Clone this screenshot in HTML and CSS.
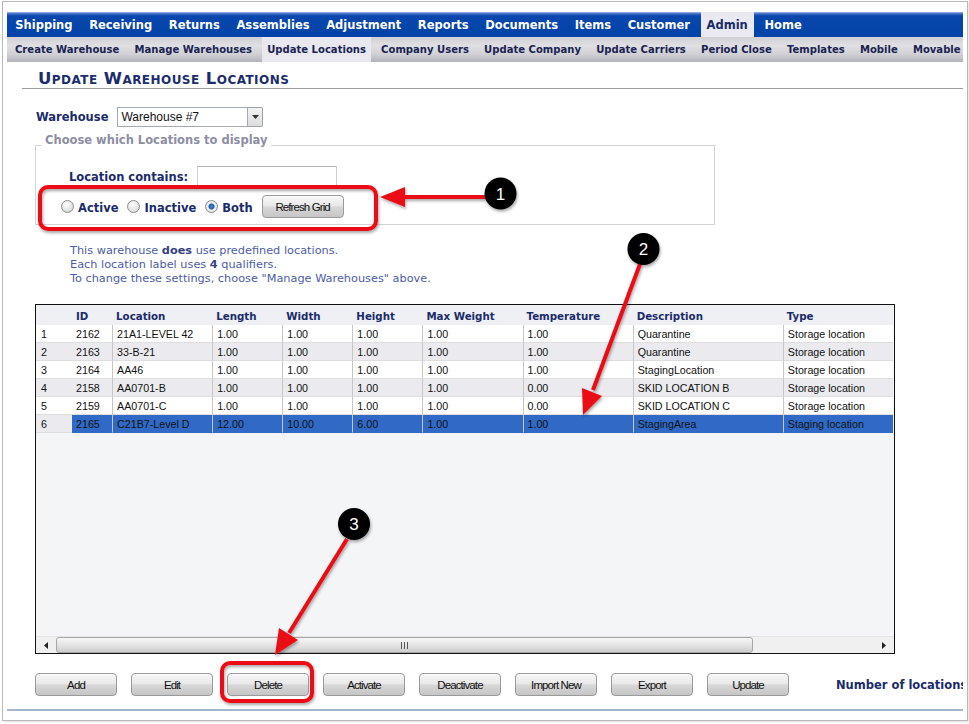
FILE: index.html
```html
<!DOCTYPE html>
<html>
<head>
<meta charset="utf-8">
<title>Update Warehouse Locations</title>
<link rel="stylesheet" href="styles.css">
</head>
<body>
<div class="window">
  <nav class="topnav">
    <a>Shipping</a><a>Receiving</a><a>Returns</a><a>Assemblies</a><a>Adjustment</a><a>Reports</a><a>Documents</a><a>Items</a><a>Customer</a><a class="active">Admin</a><a>Home</a>
  </nav>
  <nav class="subnav">
    <a>Create Warehouse</a><a>Manage Warehouses</a><a class="active">Update Locations</a><a>Company Users</a><a>Update Company</a><a>Update Carriers</a><a>Period Close</a><a>Templates</a><a>Mobile</a><a>Movable</a>
  </nav>
  <main class="content">
    <h1 class="title">Update Warehouse Locations</h1>
    <div class="wh-row">
      <span class="lbl">Warehouse</span>
      <div class="select">
        <span class="select-val">Warehouse #7</span>
        <span class="select-btn"><svg width="7" height="4" viewBox="0 0 7 4"><polygon points="0,0 7,0 3.5,4" fill="#333"/></svg></span>
      </div>
    </div>
    <fieldset class="filter">
      <legend>Choose which Locations to display</legend>
      <div class="contains-row">
        <span class="lbl">Location contains:</span>
        <span class="textbox"></span>
      </div>
      <div class="radio-row">
        <label class="radio"><input type="radio" name="st"><span class="lbl">Active</span></label>
        <label class="radio"><input type="radio" name="st"><span class="lbl">Inactive</span></label>
        <label class="radio"><input type="radio" name="st" checked><span class="lbl">Both</span></label>
        <button class="btn">Refresh Grid</button>
      </div>
    </fieldset>
    <div class="info">
      <p>This warehouse <b>does</b> use predefined locations.</p>
      <p>Each location label uses <b>4</b> qualifiers.</p>
      <p>To change these settings, choose "Manage Warehouses" above.</p>
    </div>
    <div class="grid">
      <table class="gtable">
        <colgroup>
          <col class="c-num"><col class="c-id"><col class="c-loc"><col class="c-70"><col class="c-70"><col class="c-70"><col class="c-100"><col class="c-110"><col class="c-150"><col class="c-110">
        </colgroup>
        <thead>
          <tr><th></th><th>ID</th><th>Location</th><th>Length</th><th>Width</th><th>Height</th><th>Max Weight</th><th>Temperature</th><th>Description</th><th>Type</th></tr>
        </thead>
        <tbody>
          <tr><td>1</td><td>2162</td><td>21A1-LEVEL 42</td><td>1.00</td><td>1.00</td><td>1.00</td><td>1.00</td><td>1.00</td><td>Quarantine</td><td>Storage location</td></tr>
          <tr><td>2</td><td>2163</td><td>33-B-21</td><td>1.00</td><td>1.00</td><td>1.00</td><td>1.00</td><td>1.00</td><td>Quarantine</td><td>Storage location</td></tr>
          <tr><td>3</td><td>2164</td><td>AA46</td><td>1.00</td><td>1.00</td><td>1.00</td><td>1.00</td><td>1.00</td><td>StagingLocation</td><td>Storage location</td></tr>
          <tr><td>4</td><td>2158</td><td>AA0701-B</td><td>1.00</td><td>1.00</td><td>1.00</td><td>1.00</td><td>0.00</td><td>SKID LOCATION B</td><td>Storage location</td></tr>
          <tr><td>5</td><td>2159</td><td>AA0701-C</td><td>1.00</td><td>1.00</td><td>1.00</td><td>1.00</td><td>0.00</td><td>SKID LOCATION C</td><td>Storage location</td></tr>
          <tr class="sel"><td>6</td><td>2165</td><td>C21B7-Level D</td><td>12.00</td><td>10.00</td><td>6.00</td><td>1.00</td><td>1.00</td><td>StagingArea</td><td>Staging location</td></tr>
        </tbody>
      </table>
      <div class="grid-fill"></div>
      <div class="hscroll">
        <span class="sb-btn"><svg width="4" height="7" viewBox="0 0 4 7"><polygon points="4,0 4,7 0,3.5" fill="#222"/></svg></span>
        <span class="sb-thumb"><span class="grip"></span><span class="grip"></span><span class="grip"></span></span>
        <span class="sb-track"></span>
        <span class="sb-btn"><svg width="4" height="7" viewBox="0 0 4 7"><polygon points="0,0 0,7 4,3.5" fill="#222"/></svg></span>
      </div>
    </div>
    <div class="actions">
      <button class="btn">Add</button>
      <button class="btn">Edit</button>
      <button class="btn">Delete</button>
      <button class="btn">Activate</button>
      <button class="btn">Deactivate</button>
      <button class="btn">Import New</button>
      <button class="btn">Export</button>
      <button class="btn">Update</button>
      <span class="count">Number of locations: 6</span>
    </div>
    <div class="footer-line"></div>
  </main>
</div>
<svg class="annot" width="969" height="724" viewBox="0 0 969 724">
  <defs>
    <filter id="sh" x="-30%" y="-30%" width="160%" height="160%">
      <feDropShadow dx="1" dy="2" stdDeviation="1.5" flood-color="#000" flood-opacity="0.35"/>
    </filter>
  </defs>
  <g filter="url(#sh)">
    <rect x="40" y="187" width="336" height="42" rx="8" fill="none" stroke="#ea1018" stroke-width="4"/>
    <rect x="222" y="663" width="90" height="38" rx="8" fill="none" stroke="#ea1018" stroke-width="4"/>
    <line x1="488" y1="197" x2="402" y2="197" stroke="#ea1018" stroke-width="4"/>
    <polygon points="380,197 405,187 405,207" fill="#ea1018"/>
    <line x1="640" y1="264" x2="593" y2="390" stroke="#ea1018" stroke-width="4"/>
    <polygon points="583,415 602,396 582,388" fill="#ea1018"/>
    <line x1="347" y1="539" x2="289" y2="633" stroke="#ea1018" stroke-width="4"/>
    <polygon points="275,655 298,640 279,628" fill="#ea1018"/>
    <circle cx="500.5" cy="193.5" r="16" fill="#000"/>
    <circle cx="643.5" cy="249" r="16" fill="#000"/>
    <circle cx="354" cy="524" r="16" fill="#000"/>
  </g>
  <text class="num" x="500.5" y="199.5">1</text>
  <text class="num" x="643.5" y="255">2</text>
  <text class="num" x="354" y="530">3</text>
</svg>
</body>
</html>
```

FILE: styles.css
```css
* { box-sizing: border-box; }
html, body { margin: 0; padding: 0; background: #fff; }
body {
  position: relative;
  width: 969px;
  height: 724px;
  overflow: hidden;
  font-family: "DejaVu Sans", Verdana, sans-serif;
}
.window {
  margin: 1px 0 0 2px;
  width: 966px;
  height: 720px;
  border: 1px solid #b9b9b9;
  padding: 10px 4px 0 4px;
  box-shadow: 1px 1px 2px rgba(0,0,0,0.12);
}
.topnav {
  display: flex;
  gap: 5px;
  height: 25px;
  padding-left: 2.5px;
  background: linear-gradient(#a7bbe6 0, #3563c2 2px, #0a47ad 4px, #0043a8 100%);
  white-space: nowrap;
}
.topnav a {
  height: 25px;
  font: bold 11.5px/27px "DejaVu Sans", Verdana, sans-serif;
  color: #fff;
  padding: 0 5.8px;
}
.topnav a.active { background: #e9e9f1; color: #1b2a66; }
.subnav {
  display: flex;
  gap: 5.2px;
  height: 25px;
  padding-left: 3px;
  background: linear-gradient(#d0d0d5 0, #e0e0e4 35%, #cfcfd4 70%, #b3b3bb 100%);
  white-space: nowrap;
  overflow: hidden;
}
.subnav a {
  height: 25px;
  font: bold 10.05px/26px "DejaVu Sans", Verdana, sans-serif;
  color: #1a2352;
  padding: 0 5px;
}
.subnav a.active { background: #e8e8ee; }
.content { display: block; }
.title {
  margin: 0 0 0 15px;
  padding: 7px 0 0 16px;
  height: 27px;
  border-bottom: 1px solid #9c9c9c;
  font: bold 16.5px/20px "DejaVu Sans", Verdana, sans-serif;
  font-variant: small-caps;
  letter-spacing: 0.45px;
  color: #1b2d6e;
}
.lbl {
  font: bold 11.5px/14px "DejaVu Sans", Verdana, sans-serif;
  color: #1b2b6a;
  white-space: nowrap;
}
.wh-row {
  display: flex;
  align-items: center;
  gap: 9px;
  margin: 17px 0 0 29px;
  height: 21px;
}
.select { display: flex; width: 146px; height: 20px; }
.select-val {
  flex: 1;
  border: 1px solid #a3aab4;
  background: #fff;
  font: 12px/18px "Liberation Sans", Arial, sans-serif;
  color: #111;
  padding-left: 3px;
}
.select-btn {
  width: 15px;
  border: 1px solid #9ca2aa;
  border-left: none;
  border-radius: 0 2px 2px 0;
  background: linear-gradient(#f4f4f4, #dcdcdc);
  display: flex;
  align-items: center;
  justify-content: center;
}
.filter {
  margin: 6px 0 0 28px;
  width: 680px;
  padding: 0 0 6px 0;
  border: 1px solid #d4d4d4;
}
.filter legend {
  margin-left: 6px;
  padding: 0 3px 10px 3px;
  font: bold 11.5px/14px "DejaVu Sans", Verdana, sans-serif;
  color: #8d8ea2;
}
.contains-row {
  display: flex;
  align-items: center;
  gap: 9px;
  margin-top: 9px;
  padding-left: 33px;
}
.textbox {
  width: 140px;
  height: 21px;
  border: 1px solid #cfcfcf;
  border-top-color: #b5b5b5;
  background: #fff;
}
.radio-row {
  display: flex;
  align-items: center;
  margin-top: 8px;
  padding-left: 25px;
  height: 23px;
}
.radio { display: flex; align-items: center; gap: 4px; margin-right: 9px; }
.radio .lbl { line-height: 16px; padding-top: 2px; }
.radio input {
  appearance: none;
  margin: 0;
  width: 13px;
  height: 13px;
  border-radius: 50%;
  border: 1px solid #8c8c8c;
  background: radial-gradient(circle at 40% 35%, #ffffff, #dcdcdc 70%);
}
.radio input:checked {
  background: radial-gradient(circle, #3c8fd8 0, #1c5aa8 2.5px, #f0f0f0 3.5px, #d8d8d8 100%);
}
.btn {
  width: 82px;
  height: 23px;
  padding: 0;
  border: 1px solid #9a9a9a;
  border-radius: 4px;
  background: linear-gradient(#f8f8f8 0, #e9e9e9 45%, #d6d6d6 55%, #c6c6c6 100%);
  box-shadow: inset 0 1px 0 #fff;
  font: 11.5px/22px "Liberation Sans", Arial, sans-serif;
  letter-spacing: -0.9px;
  color: #111;
  text-align: center;
}
.info {
  margin: 19px 0 0 63px;
  font: 11.3px/14px "DejaVu Sans", Verdana, sans-serif;
  color: #4d5ca5;
}
.info p { margin: 0; }
.info b { color: #34407f; }
.grid {
  margin: 18px 0 0 28px;
  width: 860px;
  height: 350px;
  border: 1px solid #111;
  background: #f4f5f7;
  display: flex;
  flex-direction: column;
}
.gtable {
  border-collapse: separate;
  border-spacing: 0;
  table-layout: fixed;
  width: 857px;
  font: 10.7px "Liberation Sans", Arial, sans-serif;
  color: #111;
}
.c-num { width: 36px; }
.c-id { width: 40px; }
.c-loc { width: 100px; }
.c-70 { width: 70px; }
.c-100 { width: 100px; }
.c-110 { width: 110px; }
.c-150 { width: 150px; }
.gtable th {
  height: 20px;
  padding: 1px 4px 0 4px;
  text-align: left;
  background: #eff0f4;
  font: bold 10.25px "DejaVu Sans", Verdana, sans-serif;
  color: #1b2b6a;
}
.gtable td {
  height: 18px;
  padding: 1px 4px 0 4px;
  white-space: nowrap;
  overflow: hidden;
  background: #fff;
  border-bottom: 1px solid #dedede;
}
.gtable td:first-child { padding-left: 5px; }
.gtable td:nth-child(n+3) { border-left: 1px solid #c6c6c6; }
.gtable tbody tr:nth-child(even) td { background: #ebebef; }
.gtable tr.sel td:nth-child(n+2) { background: #3169c6; border-bottom-color: #3169c6; }
.grid-fill { flex: 1; }
.hscroll {
  display: flex;
  height: 17px;
  background: #f0f0f0;
  border-top: 1px solid #e4e4e4;
}
.sb-btn {
  width: 20px;
  display: flex;
  align-items: center;
  justify-content: center;
}
.sb-thumb {
  width: 697px;
  border: 1px solid #a6a6a6;
  border-radius: 3px;
  background: linear-gradient(#f7f7f7, #e4e4e4 50%, #cdcdcd);
  display: flex;
  justify-content: center;
  align-items: center;
  gap: 2px;
}
.grip { width: 1px; height: 7px; background: #555; }
.sb-track { flex: 1; }
.actions {
  display: flex;
  gap: 14px;
  margin: 19px 0 0 28px;
  height: 23px;
  overflow: hidden;
  white-space: nowrap;
}
.actions .btn { flex: none; }
.count {
  margin-left: 33px;
  font: bold 11.5px/25px "DejaVu Sans", Verdana, sans-serif;
  color: #1b2b6a;
}
.footer-line {
  margin-top: 13px;
  height: 2px;
  background: #a7b5cd;
}
.annot {
  position: absolute;
  top: 0;
  left: 0;
  pointer-events: none;
}
.num {
  font: 17px "Liberation Sans", Arial, sans-serif;
  fill: #fff;
  text-anchor: middle;
}
```
